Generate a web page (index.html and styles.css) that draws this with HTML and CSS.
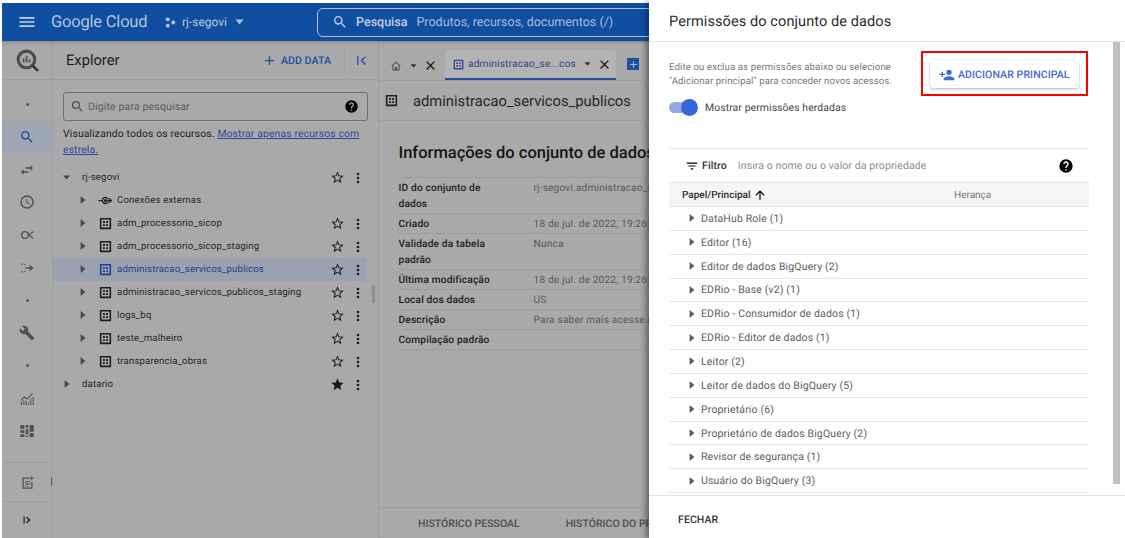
FILE: index.html
```html
<!DOCTYPE html>
<html lang="pt-BR">
<head>
    <meta charset="UTF-8">
    <title>BigQuery - Permissões do conjunto de dados</title>
    <link rel="stylesheet" href="styles.css">
</head>
<body>
    <svg class="sprites" width="0" height="0">
        <symbol id="i-search" viewBox="0 0 24 24"><path d="M15.5 14h-.79l-.28-.27A6.471 6.471 0 0 0 16 9.500 6.500 6.500 0 1 0 9.500 16c1.610 0 3.090-.59 4.230-1.570l.27.28v.79l5 4.990L20.490 19l-4.990-5zm-6 0C7.010 14 5 11.990 5 9.500S7.010 5 9.500 5 14 7.010 14 9.500 11.990 14 9.500 14z"/></symbol>
        <symbol id="i-help" viewBox="0 0 24 24"><path d="M12 2a10 10 0 1 0 0 20 10 10 0 0 0 0-20zm1 17h-2v-2h2v2zm2.100-7.700-.9.9c-.7.7-1.200 1.300-1.200 2.800h-2v-.5c0-1.100.5-2.100 1.200-2.800l1.200-1.300c.4-.3.600-.8.600-1.400a2 2 0 0 0-4 0H8a4 4 0 0 1 8 0c0 .9-.4 1.700-.9 2.300z"/></symbol>
        <symbol id="i-star" viewBox="0 0 24 24"><path d="M22 9.240l-7.190-.62L12 2 9.190 8.630 2 9.240l5.460 4.730L5.820 21 12 17.270 18.180 21l-1.630-7.030L22 9.240zM12 15.400l-3.760 2.270 1-4.280-3.320-2.880 4.380-.38L12 6.100l1.710 4.040 4.380.38-3.320 2.880 1 4.280L12 15.400z"/></symbol>
        <symbol id="i-star-full" viewBox="0 0 24 24"><path d="M12 17.270 18.180 21l-1.640-7.030L22 9.240l-7.190-.61L12 2 9.190 8.630 2 9.240l5.460 4.730L5.820 21z"/></symbol>
        <symbol id="i-more" viewBox="0 0 24 24"><path d="M12 8a2 2 0 1 0 0-4 2 2 0 0 0 0 4zm0 2a2 2 0 1 0 0 4 2 2 0 0 0 0-4zm0 6a2 2 0 1 0 0 4 2 2 0 0 0 0-4z"/></symbol>
        <symbol id="i-dataset" viewBox="0 0 24 24"><path d="M4 3h16a1 1 0 0 1 1 1v16a1 1 0 0 1-1 1H4a1 1 0 0 1-1-1V4a1 1 0 0 1 1-1zm1.500 2.500v13h13v-13h-13zM8 8h3v3H8V8zm5 0h3v3h-3V8zm-5 5h3v3H8v-3zm5 0h3v3h-3v-3z"/></symbol>
        <symbol id="i-link" viewBox="0 0 24 24"><path d="M1 11h5.400A6 6 0 0 1 12 6a6 6 0 0 1 5.500 4l-1.800.7A4 4 0 0 0 8 12a4 4 0 0 0 7.700 1.300l1.800.7A6 6 0 0 1 12 18a6 6 0 0 1-5.600-5H1v-2zm11-1.500a2.500 2.500 0 1 1 0 5 2.500 2.500 0 0 1 0-5zM18.500 8 23 12l-4.500 4-1.200-1.300 2-1.700H15v-2h4.300l-2-1.700L18.500 8z"/></symbol>
        <symbol id="i-right" viewBox="0 0 10 12"><path d="M2 1l6 5-6 5z"/></symbol>
        <symbol id="i-down" viewBox="0 0 12 10"><path d="M1 2h10L6 8z"/></symbol>
        <symbol id="i-close" viewBox="0 0 24 24"><path d="M19 6.410 17.590 5 12 10.590 6.410 5 5 6.410 10.590 12 5 17.590 6.410 19 12 13.410 17.590 19 19 17.590 13.410 12z"/></symbol>
    </svg>

    <div class="console">
        <header class="topbar">
            <svg class="menu-icon" viewBox="0 0 24 24"><path d="M3 18h18v-2H3v2zm0-5h18v-2H3v2zm0-7v2h18V6H3z"/></svg>
            <span class="brand">Google Cloud</span>
            <svg class="project-icon" viewBox="0 0 14 14"><circle cx="3.500" cy="3" r="2.500"/><circle cx="3.500" cy="11" r="2.500"/><circle cx="10.500" cy="7" r="2.500"/></svg>
            <span class="project-name">rj-segovi</span>
            <svg class="project-caret"><use href="#i-down"/></svg>
            <div class="global-search">
                <svg><use href="#i-search"/></svg>
                <strong>Pesquisa</strong>
                <span>Produtos, recursos, documentos (/)</span>
            </div>
        </header>

        <div class="workspace">
            <nav class="rail">
                <div class="rail-logo">
                    <svg viewBox="0 0 24 24"><circle cx="11" cy="11" r="8" fill="none" stroke="#4d4d4d" stroke-width="3"/><path d="M16.500 16.500 22 22" stroke="#333" stroke-width="2.500"/><path d="M7.500 10h1.600v4H7.500zM10.300 7.500h1.600V14h-1.600zM13.100 11h1.600v3h-1.600z" fill="#4d4d4d"/></svg>
                </div>
                <div class="rail-list">
                    <div class="rail-item"><i class="rail-dot"></i></div>
                    <div class="rail-item rail-item-on"><svg class="rail-search"><use href="#i-search"/></svg></div>
                    <div class="rail-item"><svg viewBox="0 0 24 24"><path d="M6.990 11 3 15l3.990 4v-3H14v-2H6.990v-3zM21 9l-3.990-4v3H10v2h7.010v3L21 9z"/></svg></div>
                    <div class="rail-item"><svg viewBox="0 0 24 24"><path d="M12 2a10 10 0 1 0 0 20 10 10 0 0 0 0-20zm0 18a8 8 0 1 1 0-16 8 8 0 0 1 0 16zm.5-13H11v6l5.200 3.200.8-1.200-4.500-2.700V7z"/></svg></div>
                    <div class="rail-item"><svg viewBox="0 0 24 24"><path d="M9 6a6 6 0 1 1 0 12A6 6 0 0 1 9 6zm0 2a4 4 0 1 0 0 8 4 4 0 0 0 0-8zm5.500 3.300L21 6l1 1.400-5.500 4.600 5.500 4.600-1 1.400-6.500-5.300z"/></svg></div>
                    <div class="rail-item"><svg viewBox="0 0 24 24"><path d="M4 5h2v2H4zM8 6h2v2H8zM10 11h2v2h-2zM8 16h2v2H8zM4 17h2v2H4zM12 11h5l-2-3 1.500-.5L22 12l-5.500 4.500L15 16l2-3h-5z"/></svg></div>
                    <div class="rail-item"><i class="rail-dot"></i></div>
                    <div class="rail-item"><svg viewBox="0 0 24 24"><path d="M22.700 19 13.600 9.900c.9-2.300.4-5-1.500-6.900-2-2-5-2.400-7.400-1.300L9 6 6 9 1.600 4.700C.4 7.100.9 10.100 2.900 12.100c1.900 1.900 4.600 2.400 6.900 1.500l9.100 9.100c.4.400 1 .4 1.400 0l2.300-2.300c.5-.4.500-1.100.1-1.400z"/></svg></div>
                    <div class="rail-item"><i class="rail-dot"></i></div>
                    <div class="rail-item"><svg viewBox="0 0 24 24"><path d="M3 21v-5h1.500v5H3zm3.500 0v-7H8v7H6.500zm3.500 0v-6h1.500v6H10zm3.500 0v-4H15v4h-1.500zm3.500 0V11h1.500v10H17zm3.500 0V9H22v12h-1.500zM2 14l6-6 4 3 8-8 1 1-9 9-4-3-5 5z"/></svg></div>
                    <div class="rail-item"><svg viewBox="0 0 24 24"><path d="M2 3h6v6H2zM10 3h4v4h-4zM16 3h6v10h-6zM2 11h6v4H2zM10 9h4v8h-4zM2 17h6v4H2zM10 19h4v2h-4zM16 15h6v6h-6z"/></svg></div>
                    <div class="rail-item"><i class="rail-stub"></i></div>
                </div>
                <div class="rail-foot">
                    <svg viewBox="0 0 24 24"><path d="M4 4h11v2H6v14h12v-9h2v11H4V4zm4 6h8v1.500H8V10zm0 3.500h8V15H8v-1.500zM8 17h5v1.500H8V17zM18 2h1.500v2.500H22V6h-2.500v2.500H18V6h-2.500V4.500H18V2z"/></svg>
                    <i class="rail-mark"></i>
                </div>
                <div class="rail-foot rail-expand">
                    <svg viewBox="0 0 24 24"><path d="M5 5h2.500v14H5zM12 5l7 7-7 7-1.800-1.800 5.200-5.200-5.200-5.200z"/></svg>
                </div>
            </nav>

            <section class="explorer">
                <div class="explorer-head">
                    <h2>Explorer</h2>
                    <button class="add-data"><svg viewBox="0 0 24 24"><path d="M19 13h-6v6h-2v-6H5v-2h6V5h2v6h6v2z"/></svg>ADD DATA</button>
                    <div class="collapse">
                        <svg viewBox="0 0 24 24"><path d="M5 5h2v14H5zM19 6.500 13.500 12l5.500 5.500-1.500 1.500-7-7 7-7z"/></svg>
                    </div>
                </div>
                <div class="explorer-body">
                    <div class="tree-search">
                        <svg class="tree-search-icon"><use href="#i-search"/></svg>
                        <span>Digite para pesquisar</span>
                        <svg class="tree-search-help"><use href="#i-help"/></svg>
                    </div>
                    <p class="tree-note">Visualizando todos os recursos. <a>Mostrar apenas recursos com estrela.</a></p>
                    <ul class="tree">
                        <li class="tree-row">
                            <svg class="caret-down"><use href="#i-down"/></svg>
                            <span class="tree-name">rj-segovi</span>
                            <svg class="tree-star"><use href="#i-star"/></svg><svg class="tree-more"><use href="#i-more"/></svg>
                        </li>
                        <li class="tree-row tree-child">
                            <svg class="caret"><use href="#i-right"/></svg><svg class="tree-icon"><use href="#i-link"/></svg>
                            <span class="tree-name">Conexões externas</span>
                        </li>
                        <li class="tree-row tree-child">
                            <svg class="caret"><use href="#i-right"/></svg><svg class="tree-icon"><use href="#i-dataset"/></svg>
                            <span class="tree-name">adm_processorio_sicop</span>
                            <svg class="tree-star"><use href="#i-star"/></svg><svg class="tree-more"><use href="#i-more"/></svg>
                        </li>
                        <li class="tree-row tree-child">
                            <svg class="caret"><use href="#i-right"/></svg><svg class="tree-icon"><use href="#i-dataset"/></svg>
                            <span class="tree-name">adm_processorio_sicop_staging</span>
                            <svg class="tree-star"><use href="#i-star"/></svg><svg class="tree-more"><use href="#i-more"/></svg>
                        </li>
                        <li class="tree-row tree-child tree-row-on">
                            <svg class="caret"><use href="#i-right"/></svg><svg class="tree-icon"><use href="#i-dataset"/></svg>
                            <span class="tree-name">administracao_servicos_publicos</span>
                            <svg class="tree-star"><use href="#i-star"/></svg><svg class="tree-more"><use href="#i-more"/></svg>
                        </li>
                        <li class="tree-row tree-child">
                            <svg class="caret"><use href="#i-right"/></svg><svg class="tree-icon"><use href="#i-dataset"/></svg>
                            <span class="tree-name">administracao_servicos_publicos_staging</span>
                            <svg class="tree-star"><use href="#i-star"/></svg><svg class="tree-more"><use href="#i-more"/></svg>
                        </li>
                        <li class="tree-row tree-child">
                            <svg class="caret"><use href="#i-right"/></svg><svg class="tree-icon"><use href="#i-dataset"/></svg>
                            <span class="tree-name">logs_bq</span>
                            <svg class="tree-star"><use href="#i-star"/></svg><svg class="tree-more"><use href="#i-more"/></svg>
                        </li>
                        <li class="tree-row tree-child">
                            <svg class="caret"><use href="#i-right"/></svg><svg class="tree-icon"><use href="#i-dataset"/></svg>
                            <span class="tree-name">teste_malheiro</span>
                            <svg class="tree-star"><use href="#i-star"/></svg><svg class="tree-more"><use href="#i-more"/></svg>
                        </li>
                        <li class="tree-row tree-child">
                            <svg class="caret"><use href="#i-right"/></svg><svg class="tree-icon"><use href="#i-dataset"/></svg>
                            <span class="tree-name">transparencia_obras</span>
                            <svg class="tree-star"><use href="#i-star"/></svg><svg class="tree-more"><use href="#i-more"/></svg>
                        </li>
                        <li class="tree-row">
                            <svg class="caret caret-root"><use href="#i-right"/></svg>
                            <span class="tree-name">datario</span>
                            <svg class="tree-star"><use href="#i-star-full"/></svg><svg class="tree-more"><use href="#i-more"/></svg>
                        </li>
                    </ul>
                    <div class="explorer-thumb"></div>
                </div>
            </section>

            <main class="details">
                <div class="tabs">
                    <div class="tab-home">
                        <svg class="home-icon" viewBox="0 0 24 24"><path d="M12 3 2 12h3v9h14v-9h3L12 3zm-5 16v-8.800l5-4.500 5 4.500V19h-3v-5h-4v5H7z"/></svg>
                        <svg class="tab-caret"><use href="#i-down"/></svg>
                        <svg class="tab-close"><use href="#i-close"/></svg>
                    </div>
                    <div class="tab-active">
                        <svg class="tab-icon"><use href="#i-dataset"/></svg>
                        <span>administracao_se...cos</span>
                        <svg class="tab-caret"><use href="#i-down"/></svg>
                        <svg class="tab-close"><use href="#i-close"/></svg>
                    </div>
                    <div class="tab-add"><svg viewBox="0 0 24 24"><path d="M19 13h-6v6h-2v-6H5v-2h6V5h2v6h6v2z"/></svg></div>
                </div>
                <div class="dataset-title">
                    <svg><use href="#i-dataset"/></svg>
                    <h1>administracao_servicos_publicos</h1>
                </div>
                <div class="info">
                    <h3>Informações do conjunto de dados</h3>
                    <dl class="info-table">
                        <div class="info-row"><dt>ID do conjunto de dados</dt><dd>rj-segovi.administracao_servicos_publicos</dd></div>
                        <div class="info-row"><dt>Criado</dt><dd>18 de jul. de 2022, 19:26:10</dd></div>
                        <div class="info-row"><dt>Validade da tabela padrão</dt><dd>Nunca</dd></div>
                        <div class="info-row"><dt>Última modificação</dt><dd>18 de jul. de 2022, 19:26:10</dd></div>
                        <div class="info-row"><dt>Local dos dados</dt><dd>US</dd></div>
                        <div class="info-row"><dt>Descrição</dt><dd>Para saber mais acesse nosso site</dd></div>
                        <div class="info-row"><dt>Compilação padrão</dt><dd></dd></div>
                    </dl>
                </div>
                <div class="history">
                    <span>HISTÓRICO PESSOAL</span>
                    <span>HISTÓRICO DO PROJETO</span>
                </div>
            </main>
        </div>
    </div>

    <aside class="drawer">
        <div class="drawer-head">Permissões do conjunto de dados</div>
        <div class="drawer-scroll">
            <div class="drawer-body">
                <div class="intro">
                    <div class="intro-left">
                        <p>Edite ou exclua as permissões abaixo ou selecione<br>"Adicionar principal" para conceder novos acessos.</p>
                        <label class="toggle-line"><span class="toggle"><i></i></span>Mostrar permissões herdadas</label>
                    </div>
                    <div class="highlight">
                        <button class="add-principal">
                            <svg viewBox="0 0 24 24"><path d="M15 12a4 4 0 1 0 0-8 4 4 0 0 0 0 8zm-9-2V7H4v3H1v2h3v3h2v-3h3v-2H6zm9 4c-2.700 0-8 1.300-8 4v2h16v-2c0-2.700-5.300-4-8-4z"/></svg>
                            ADICIONAR PRINCIPAL
                        </button>
                    </div>
                </div>
                <div class="filter">
                    <svg class="filter-icon" viewBox="0 0 24 24"><path d="M3 6h18v2H3zM6 11h12v2H6zM10 16h4v2h-4z"/></svg>
                    <span class="filter-label">Filtro</span>
                    <span class="filter-hint">Insira o nome ou o valor da propriedade</span>
                    <svg class="filter-help"><use href="#i-help"/></svg>
                </div>
                <div class="role-head">
                    <span class="role-col">Papel/Principal <svg viewBox="0 0 24 24"><path d="M4 12l1.400 1.400L11 7.800V20h2V7.800l5.600 5.600L20 12l-8-8z"/></svg></span>
                    <span class="role-inherit">Herança</span>
                </div>
                <ul class="roles">
                    <li><svg><use href="#i-right"/></svg>DataHub Role (1)</li>
                    <li><svg><use href="#i-right"/></svg>Editor (16)</li>
                    <li><svg><use href="#i-right"/></svg>Editor de dados BigQuery (2)</li>
                    <li><svg><use href="#i-right"/></svg>EDRio - Base (v2) (1)</li>
                    <li><svg><use href="#i-right"/></svg>EDRio - Consumidor de dados (1)</li>
                    <li><svg><use href="#i-right"/></svg>EDRio - Editor de dados (1)</li>
                    <li><svg><use href="#i-right"/></svg>Leitor (2)</li>
                    <li><svg><use href="#i-right"/></svg>Leitor de dados do BigQuery (5)</li>
                    <li><svg><use href="#i-right"/></svg>Proprietário (6)</li>
                    <li><svg><use href="#i-right"/></svg>Proprietário de dados BigQuery (2)</li>
                    <li><svg><use href="#i-right"/></svg>Revisor de segurança (1)</li>
                    <li><svg><use href="#i-right"/></svg>Usuário do BigQuery (3)</li>
                </ul>
            </div>
            <div class="drawer-bar"></div>
        </div>
        <div class="drawer-foot"><button class="close-button">FECHAR</button></div>
    </aside>
</body>
</html>
```

FILE: styles.css
```css
* {
    box-sizing: border-box;
}

html, body {
    height: 100%;
}

body {
    margin: 0;
    display: flex;
    height: 538px;
    overflow: hidden;
    background: #fff;
    font-family: Roboto, "Liberation Sans", sans-serif;
    color: #1a1a1a;
    text-rendering: geometricPrecision;
}

.sprites {
    position: absolute;
}

ul, dl, dd, p, h1, h2, h3 {
    margin: 0;
    padding: 0;
    font-weight: normal;
}

ul {
    list-style: none;
}

button {
    font-family: inherit;
    text-rendering: inherit;
    border: none;
    background: none;
    padding: 0;
}

/* dimmed console behind the drawer */
.console {
    flex: 0 0 647px;
    margin: 3px 0 0 2px;
    display: flex;
    flex-direction: column;
    overflow: hidden;
    background: #a9a9a9;
}

.topbar {
    flex: 0 0 38px;
    display: flex;
    align-items: center;
    background: #0f4ea0;
    color: #b8c6dc;
    box-shadow: 0 1px 3px rgba(0, 0, 0, 0.25);
    position: relative;
}

.menu-icon {
    width: 20px;
    height: 20px;
    flex-shrink: 0;
    margin-left: 15px;
    fill: #c4cfe1;
}

.brand {
    flex: 0 0 114px;
    margin-left: 14px;
    font-size: 16.500px;
    letter-spacing: -0.2px;
    white-space: nowrap;
    color: #b5c3da;
}

.project-icon {
    flex-shrink: 0;
    width: 11px;
    height: 11px;
    fill: #b5c3da;
}

.project-name {
    flex: 0 0 auto;
    margin-left: 6px;
    font-size: 12px;
    white-space: nowrap;
    color: #bac7dc;
}

.project-caret {
    flex-shrink: 0;
    width: 11px;
    height: 8px;
    margin-left: 7px;
    fill: #b5c3da;
}

.global-search {
    margin-left: 72px;
    width: 400px;
    height: 29px;
    flex-shrink: 0;
    border: 1px solid #b5c3da;
    border-radius: 6px;
    display: flex;
    align-items: center;
    font-size: 12.500px;
    white-space: nowrap;
}

.global-search svg {
    width: 16px;
    height: 16px;
    margin-left: 14px;
    fill: #c4cfe1;
}

.global-search strong {
    margin-left: 8px;
    font-weight: 500;
    color: #c4cfe1;
}

.global-search span {
    margin-left: 9px;
    color: #aebdd6;
}

.workspace {
    flex: 1;
    display: flex;
    min-height: 0;
}

/* left icon rail */
.rail {
    flex: 0 0 51px;
    display: flex;
    flex-direction: column;
    border-right: 1px solid #9d9d9d;
}

.rail-logo {
    flex: 0 0 39px;
    display: flex;
    align-items: center;
    justify-content: center;
    border-bottom: 1px solid #9d9d9d;
}

.rail-logo svg {
    width: 25px;
    height: 25px;
}

.rail-list {
    flex: 0 0 382px;
    padding-top: 8px;
    overflow: hidden;
}

.rail-item {
    height: 32.700px;
    display: flex;
    align-items: center;
    justify-content: center;
}

.rail-item svg {
    width: 16px;
    height: 16px;
    fill: #4f4f4f;
}

.rail-item-on {
    background: #a0a6b4;
}

.rail .rail-search {
    fill: #1c4aa0;
}

.rail-dot {
    width: 3px;
    height: 3px;
    border-radius: 50%;
    background: #555;
}

.rail-stub {
    width: 12px;
    height: 2px;
    background: #666;
    margin-top: 30px;
}

.rail-foot {
    flex: 0 0 39px;
    display: flex;
    align-items: center;
    justify-content: center;
    border-top: 1px solid #9d9d9d;
    position: relative;
}

.rail-foot svg {
    width: 15px;
    height: 15px;
    fill: #4f4f4f;
}

.rail-mark {
    position: absolute;
    right: 0;
    top: 14px;
    width: 1px;
    height: 9px;
    background: #7a5a45;
}

.rail-expand {
    flex: 1;
}

.rail-expand svg {
    fill: #222;
    width: 12px;
    height: 12px;
}

/* explorer column */
.explorer {
    flex: 0 0 325px;
    display: flex;
    flex-direction: column;
    border-right: 1px solid #9f9f9f;
}

.explorer-head {
    flex: 0 0 39px;
    display: flex;
    align-items: center;
    padding-left: 13px;
    border-bottom: 1px solid #9d9d9d;
}

.explorer-head h2 {
    font-size: 14.700px;
    flex: 1;
    color: #1c1c1c;
}

.add-data {
    display: flex;
    align-items: center;
    gap: 4px;
    color: #1f4ea3;
    font-size: 10.700px;
    font-weight: 500;
}

.add-data svg {
    width: 15px;
    height: 15px;
    fill: #1f4ea3;
}

.collapse {
    margin-left: 13px;
    width: 34px;
    height: 29px;
    border-left: 1px solid #9d9d9d;
    display: flex;
    align-items: center;
    justify-content: center;
}

.collapse svg {
    width: 15px;
    height: 15px;
    fill: #1f4ea3;
}

.explorer-body {
    flex: 1;
    padding: 12px 0 0;
    position: relative;
}

.tree-search {
    margin: 0 10px;
    width: 305px;
    height: 29px;
    border: 1px solid #6f6f6f;
    border-radius: 3px;
    display: flex;
    align-items: center;
    font-size: 10.500px;
    letter-spacing: 0.15px;
    color: #5b5b5b;
}

.tree-search-icon {
    width: 15px;
    height: 15px;
    margin: 0 3px 0 6px;
    fill: #4f4f4f;
}

.tree-search span {
    flex: 1;
}

.tree-search-help {
    width: 15px;
    height: 15px;
    margin-right: 8px;
}

.tree-note {
    margin: 5px 10px 0;
    width: 305px;
    font-size: 10.350px;
    line-height: 16px;
    letter-spacing: 0.15px;
    color: #1d1d1d;
}

.tree-note a {
    color: #254c9c;
    text-decoration: underline;
}

.tree {
    margin-top: 8px;
    width: 314px;
}

.tree-row {
    height: 23px;
    display: flex;
    align-items: center;
    padding-left: 29px;
    color: #262626;
    position: relative;
}

.tree-child {
    padding-left: 64px;
}

.tree-row-on {
    background: #9ba1b0;
    color: #233f87;
}

.tree-row-on .tree-icon {
    fill: #1c3f96;
}

.tree-name {
    flex: 1;
    white-space: nowrap;
    font-size: 9.600px;
    letter-spacing: 0.17px;
}

.caret-down {
    position: absolute;
    left: 9px;
    top: 8px;
    width: 9px;
    height: 7px;
    fill: #4a4a4a;
}

.caret {
    position: absolute;
    left: 26px;
    top: 6px;
    width: 8px;
    height: 10px;
    fill: #4a4a4a;
}

.caret-root {
    left: 10px;
}

.tree-icon {
    position: absolute;
    left: 45px;
    top: 4px;
    width: 15px;
    height: 15px;
    fill: #1d1d1d;
}

.tree-star {
    width: 15px;
    height: 15px;
    fill: #1a1a1a;
    margin-right: 5px;
}

.tree-more {
    width: 16px;
    height: 16px;
    fill: #1a1a1a;
    margin-right: 1px;
}

.explorer-thumb {
    position: absolute;
    right: 3px;
    top: 205px;
    width: 3px;
    height: 18px;
    background: #8e8e8e;
}

/* dataset details */
.details {
    flex: 0 0 271px;
    display: flex;
    flex-direction: column;
    overflow: hidden;
    box-shadow: inset -7px 0 6px -5px rgba(0, 0, 0, 0.25);
}

.tabs {
    flex: 0 0 40px;
    display: flex;
    align-items: flex-end;
    border-bottom: 1px solid #9d9d9d;
}

.tab-home {
    width: 66px;
    height: 29px;
    display: flex;
    align-items: center;
    padding-left: 11px;
}

.home-icon {
    width: 12px;
    height: 12px;
    fill: #4f4f4f;
}

.tab-caret {
    width: 7px;
    height: 6px;
    margin-left: 8px;
    fill: #333;
}

.tab-close {
    width: 15px;
    height: 15px;
    margin-left: 6px;
    fill: #1a1a1a;
}

.tab-active {
    width: 171px;
    height: 30px;
    display: flex;
    align-items: center;
    padding-left: 7px;
    background: #b3b3b3;
    border-bottom: 2px solid #274c9e;
    border-radius: 3px 3px 0 0;
    font-size: 10.200px;
    letter-spacing: 0.15px;
    color: #30498f;
}

.tab-icon {
    width: 13px;
    height: 13px;
    margin-right: 3px;
    fill: #30498f;
}

.tab-add {
    margin: 0 0 10px 11px;
    width: 12px;
    height: 12px;
    background: #214ea5;
    display: flex;
    align-items: center;
    justify-content: center;
}

.tab-add svg {
    width: 11px;
    height: 11px;
    fill: #b8c6dc;
}

.dataset-title {
    flex: 0 0 40px;
    display: flex;
    align-items: center;
    padding-left: 5px;
    border-bottom: 1px solid #9d9d9d;
}

.dataset-title svg {
    width: 15px;
    height: 15px;
    fill: #1d1d1d;
}

.dataset-title h1 {
    margin-left: 14px;
    font-size: 14.750px;
    white-space: nowrap;
    color: #262626;
}

.info {
    flex: 1;
    padding: 23px 0 0 19.500px;
}

.info h3 {
    font-size: 16.500px;
    font-weight: 500;
    white-space: nowrap;
    color: #151515;
}

.info-table {
    margin: 13.500px 0 0;
    border-top: 1px solid #9d9d9d;
}

.info-row {
    display: flex;
    border-bottom: 1px solid #9d9d9d;
    font-size: 10.200px;
    line-height: 16px;
    padding: 3px 0 0;
    white-space: nowrap;
    min-height: 19.700px;
}

.info-row dt {
    flex: 0 0 135px;
    padding-right: 24px;
    font-weight: 500;
    white-space: normal;
    color: #1c1c1c;
    letter-spacing: 0.15px;
}

.info-row dd {
    color: #5a5a5a;
    letter-spacing: 0.15px;
}

.history {
    flex: 0 0 31px;
    display: flex;
    align-items: center;
    padding-left: 39px;
    gap: 46px;
    border-top: 1px solid #9d9d9d;
    font-size: 10.500px;
    font-weight: 500;
    white-space: nowrap;
    color: #4f4f4f;
}

/* permissions drawer */
.drawer {
    flex: 0 0 476px;
    display: flex;
    flex-direction: column;
    background: #fff;
    box-shadow: -3px 0 6px rgba(0, 0, 0, 0.3);
    position: relative;
}

.drawer-head {
    flex: 0 0 42px;
    padding: 13px 0 0 20px;
    font-size: 14.500px;
    letter-spacing: 0.1px;
    color: #2c2c2c;
    border-bottom: 1px solid #e4e4e4;
}

.drawer-scroll {
    flex: 0 0 453px;
    display: flex;
    align-items: flex-start;
}

.drawer-body {
    flex: 0 0 464px;
    height: 453px;
    padding: 9px 24px 0 20px;
    overflow: hidden;
}

.drawer-bar {
    width: 7px;
    height: 442px;
    background: #c1c1c1;
}

.intro {
    display: flex;
    justify-content: space-between;
    height: 97px;
}

.intro-left p {
    margin-top: 10px;
    font-size: 9.600px;
    line-height: 14px;
    letter-spacing: 0.12px;
    color: #777;
}

.toggle-line {
    margin-top: 10px;
    display: flex;
    align-items: center;
    gap: 7px;
    font-size: 10.400px;
    letter-spacing: 0.1px;
    color: #444;
}

.toggle {
    width: 29px;
    height: 17px;
    display: block;
    position: relative;
}

.toggle::before {
    content: "";
    position: absolute;
    left: 0;
    top: 3px;
    width: 26px;
    height: 11px;
    border-radius: 6px;
    background: #8fa9ea;
}

.toggle i {
    position: absolute;
    right: 0;
    top: 0;
    width: 17px;
    height: 17px;
    border-radius: 50%;
    background: #3367d6;
}

.highlight {
    width: 167px;
    height: 45px;
    margin-right: 1px;
    padding: 8px 7px;
    border: 2px solid #f00;
}

.add-principal {
    width: 149px;
    height: 27px;
    display: flex;
    align-items: center;
    padding-left: 9px;
    gap: 3px;
    border-radius: 3px;
    background: #fff;
    box-shadow: 0 1px 3px rgba(0, 0, 0, 0.3);
    color: #3f6bd3;
    font-size: 10.500px;
    font-weight: 500;
    letter-spacing: 0.1px;
    white-space: nowrap;
}

.add-principal svg {
    width: 16px;
    height: 16px;
    fill: #3f6bd3;
}

.filter {
    height: 34px;
    display: flex;
    align-items: center;
    padding-left: 16px;
    border-top: 1px solid #e6e6e6;
    font-size: 10.500px;
    letter-spacing: 0.1px;
}

.filter-icon {
    width: 14px;
    height: 14px;
    margin-right: 3px;
}

.filter-label {
    font-weight: 500;
    color: #333;
}

.filter-hint {
    margin-left: 11px;
    flex: 1;
    color: #8f8a96;
}

.filter-help {
    width: 16px;
    height: 16px;
    margin-right: 15px;
}

.role-head {
    height: 25px;
    display: flex;
    align-items: center;
    padding: 1px 0 0 13px;
    background: #f5f5f5;
    border-top: 1px solid #e4e4e4;
    border-bottom: 1px solid #e4e4e4;
    font-size: 10px;
}

.role-col {
    flex: 0 0 272px;
    display: flex;
    align-items: center;
    gap: 2px;
    font-weight: 500;
    color: #2b2b2b;
}

.role-col svg {
    width: 14px;
    height: 14px;
}

.role-inherit {
    color: #757575;
}

.roles li {
    height: 23.850px;
    display: flex;
    align-items: center;
    padding-left: 19px;
    border-bottom: 1px solid #e6e6e6;
    font-size: 10.500px;
    letter-spacing: 0.15px;
    color: #5d5d5d;
}

.roles svg {
    width: 8px;
    height: 10px;
    margin-right: 5px;
    fill: #5a5a5a;
}

.drawer-foot {
    flex: 1;
    display: flex;
    align-items: center;
    padding: 5px 0 0 29px;
    border-top: 1px solid #e4e4e4;
}

.close-button {
    font-size: 10.500px;
    font-weight: 500;
    color: #333;
    letter-spacing: 0.1px;
}
```
